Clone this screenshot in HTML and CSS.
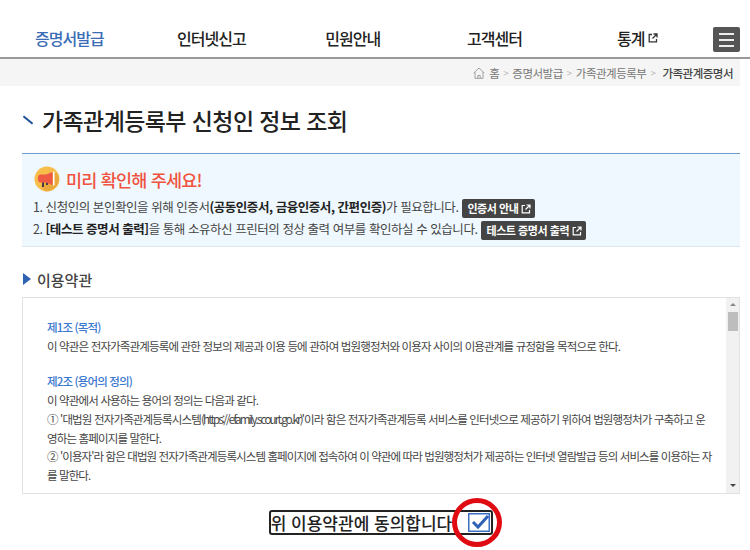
FILE: index.html
```html
<!DOCTYPE html>
<html lang="ko">
  <head>
    <meta charset="UTF-8" />
    <meta name="viewport" content="width=device-width, initial-scale=1.0" />
    <title>가족관계등록부 신청인 정보 조회</title>
    <link rel="stylesheet" href="styles.css">
  </head>
  <body>
    <header class="top-nav">
      <a class="nav-item active">증명서발급</a>
      <a class="nav-item">인터넷신고</a>
      <a class="nav-item">민원안내</a>
      <a class="nav-item">고객센터</a>
      <a class="nav-item">통계
        <svg class="ext-icon" viewBox="0 0 10 10"><path d="M4 1.500H1.200v7.300h7.300V6M5.500 1H9v3.500M9 1L4.500 5.500" fill="none" stroke="#333" stroke-width="1.300"/></svg>
      </a>
      <button class="menu-btn"><span></span><span></span><span></span></button>
    </header>

    <nav class="breadcrumb">
      <svg class="home-icon" viewBox="0 0 12 12"><path d="M0.700 6L6 1l5.300 5M2 5v6.300h8V5M4.800 11.300V8.500h2.400v2.800" fill="none" stroke="#999" stroke-width="0.900"/></svg>
      <span>홈</span><i class="sep">&gt;</i>
      <span>증명서발급</span><i class="sep">&gt;</i>
      <span>가족관계등록부</span><i class="sep">&gt;</i>
      <strong>가족관계증명서</strong>
    </nav>

    <main class="content">
      <h1 class="page-title"><span class="title-mark"></span>가족관계등록부 신청인 정보 조회</h1>

      <section class="notice">
        <div class="notice-head">
          <svg class="horn" viewBox="0 0 26 26">
            <circle cx="13" cy="13" r="12.500" fill="#f7bd4b"/>
            <path d="M20 5.500L24 8.500A12.500 12.500 0 0 1 11 25.300L7 20z" fill="#eaa93c"/>
            <rect x="8" y="15" width="2" height="6" fill="#4a3a45"/>
            <rect x="12" y="15" width="2" height="4" fill="#4a3a45"/>
            <path d="M7 8.500h5L18.500 6v13L12 16.500H7a3 3 0 0 1-3-3v-2a3 3 0 0 1 3-3z" fill="#ee5a44"/>
            <rect x="19" y="5.500" width="1.500" height="14" fill="#fff"/>
          </svg>
          <h2>미리 확인해 주세요!</h2>
        </div>
        <p>1. 신청인의 본인확인을 위해 인증서<b>(공동인증서, 금융인증서, 간편인증)</b>가 필요합니다.<a class="tag">인증서 안내<svg class="ext-icon" viewBox="0 0 10 10"><path d="M4 1.500H1.200v7.300h7.300V6M5.500 1H9v3.500M9 1L4.500 5.500" fill="none" stroke="#fff" stroke-width="1.200"/></svg></a></p>
        <p>2. <b>[테스트 증명서 출력]</b>을 통해 소유하신 프린터의 정상 출력 여부를 확인하실 수 있습니다.<a class="tag">테스트 증명서 출력<svg class="ext-icon" viewBox="0 0 10 10"><path d="M4 1.500H1.200v7.300h7.300V6M5.500 1H9v3.500M9 1L4.500 5.500" fill="none" stroke="#fff" stroke-width="1.200"/></svg></a></p>
      </section>

      <h3 class="section-title"><span class="arrow"></span>이용약관</h3>

      <div class="terms">
        <div class="terms-text">
          <h4>제1조 (목적)</h4>
          <p>이 약관은 전자가족관계등록에 관한 정보의 제공과 이용 등에 관하여 법원행정처와 이용자 사이의 이용관계를 규정함을 목적으로 한다.</p>
          <h4 class="gap">제2조 (용어의 정의)</h4>
          <p>이 약관에서 사용하는 용어의 정의는 다음과 같다.</p>
          <p>① '대법원 전자가족관계등록시스템<span class="url">(https://efamily.scourt.go.kr)</span>'이라 함은 전자가족관계등록 서비스를 인터넷으로 제공하기 위하여 법원행정처가 구축하고 운영하는 홈페이지를 말한다.</p>
          <p class="tight">② '이용자'라 함은 대법원 전자가족관계등록시스템 홈페이지에 접속하여 이 약관에 따라 법원행정처가 제공하는 인터넷 열람발급 등의 서비스를 이용하는 자를 말한다.</p>
        </div>
        <div class="scrollbar">
          <span class="up"></span>
          <span class="thumb"></span>
          <span class="down"></span>
        </div>
      </div>

      <div class="agree">
        <div class="agree-box">
          <span>위 이용약관에 동의합니다.</span>
          <svg class="check" viewBox="0 0 22 19">
            <rect x="0.750" y="0.750" width="20.500" height="17.500" fill="#fff" stroke="#3a6fc0" stroke-width="1.500"/>
            <path d="M5 9l5 5L20 3" fill="none" stroke="#2f62b5" stroke-width="3"/>
          </svg>
          <span class="red-circle"></span>
        </div>
      </div>
    </main>
  </body>
</html>
```

FILE: styles.css
```css
html, body {
    height: 550px;
    overflow: hidden;
}
body {
    margin: 0;
    font-family: "Noto Sans CJK KR", "Noto Sans", sans-serif;
    background-color: #fff;
    color: #333;
}
.top-nav {
    display: flex;
    align-items: center;
    height: 57px;
    padding-left: 35px;
    padding-right: 10px;
    border-bottom: 2px solid #999;
}
.nav-item {
    font-size: 16px;
    font-weight: 500;
    letter-spacing: -1px;
    color: #222;
    margin-top: 18px;
    margin-right: 73.500px;
    display: flex;
    align-items: center;
    gap: 4px;
}
.nav-item:nth-child(2) {
    margin-right: 79.500px;
}
.nav-item:nth-child(3) {
    margin-right: 87px;
}
.nav-item:nth-child(4) {
    margin-right: 95px;
}
.nav-item:nth-child(5) {
    margin-right: 0;
}
.nav-item.active {
    color: #3a6db5;
}
.ext-icon {
    width: 10px;
    height: 10px;
}
.menu-btn {
    margin-left: auto;
    margin-top: 22px;
    width: 27px;
    height: 25px;
    padding: 0;
    border: none;
    border-radius: 2px;
    background-color: #555;
    display: flex;
    flex-direction: column;
    justify-content: center;
    align-items: center;
    gap: 4px;
}
.menu-btn span {
    width: 15px;
    height: 2px;
    background-color: #eee;
}
.breadcrumb {
    margin-right: 10px;
    height: 27px;
    background-color: #f5f5f5;
    display: flex;
    align-items: center;
    justify-content: flex-end;
    padding-right: 7px;
    font-size: 11.500px;
    letter-spacing: -0.500px;
    color: #777;
    gap: 4px;
}
.breadcrumb strong {
    font-weight: 500;
    color: #444;
    margin-left: 3px;
}
.home-icon {
    width: 12px;
    height: 12px;
}
.sep {
    font-style: normal;
    font-size: 10px;
    color: #bbb;
}
.content {
    padding: 0 10px 0 22px;
}
.page-title {
    margin: 10px 0 0 0;
    height: 48px;
    display: flex;
    align-items: center;
    font-size: 23px;
    font-weight: 500;
    letter-spacing: -0.600px;
    color: #222;
}
.title-mark {
    width: 12px;
    height: 2px;
    background-color: #1f4f96;
    transform: rotate(40deg);
    margin-right: 8px;
}
.notice {
    margin-top: 9px;
    height: 94px;
    box-sizing: border-box;
    border-top: 1px solid #6f9bd1;
    border-bottom: 1px solid #dde8ee;
    background-color: #eff8fe;
    padding: 12px 12px 0 12px;
}
.notice-head {
    display: flex;
    align-items: center;
    gap: 6px;
    height: 26px;
    margin-bottom: 4px;
}
.horn {
    width: 26px;
    height: 26px;
}
.notice-head h2 {
    margin: 0;
    font-size: 17.500px;
    font-weight: 500;
    letter-spacing: -0.800px;
    color: #f0533f;
}
.notice p {
    margin: 0 0 0 -1px;
    line-height: 22px;
    white-space: nowrap;
    font-size: 12.500px;
    letter-spacing: -0.450px;
    color: #444;
}
.notice b {
    font-weight: 700;
    color: #222;
}
.tag {
    display: inline-flex;
    align-items: center;
    gap: 3px;
    height: 19px;
    margin-left: 4px;
    padding: 0 4px 0 5px;
    border-radius: 2px;
    background-color: #444;
    color: #fff;
    font-size: 11px;
    line-height: 19px;
    font-weight: 700;
    vertical-align: middle;
}
.section-title {
    margin: 21px 0 0 0;
    height: 22px;
    display: flex;
    align-items: center;
    font-size: 15px;
    font-weight: 500;
    color: #444;
}
.arrow {
    width: 0;
    height: 0;
    border-left: 8px solid #2f62b5;
    border-top: 6px solid transparent;
    border-bottom: 6px solid transparent;
    margin-left: 1px;
    margin-right: 6px;
}
.terms {
    margin-top: 7px;
    height: 197px;
    box-sizing: border-box;
    border: 1px solid #e2e2e2;
    display: flex;
}
.terms-text {
    flex: 1;
    padding: 20px 12px 0 24px;
    font-size: 11.500px;
    letter-spacing: -0.850px;
    line-height: 18.900px;
    color: #444;
    overflow: hidden;
    word-break: break-all;
}
.terms-text h4 {
    margin: 0;
    font-size: 11.500px;
    font-weight: 500;
    color: #3a78d0;
}
.terms-text h4.gap {
    margin-top: 16px;
}
.terms-text p {
    margin: 0;
}
.terms-text p.tight {
    letter-spacing: -0.900px;
}
.url {
    letter-spacing: -1.800px;
}
.scrollbar {
    width: 13px;
    background-color: #f1f1f1;
    display: flex;
    flex-direction: column;
    align-items: center;
}
.up, .down {
    width: 0;
    height: 0;
    border-left: 3px solid transparent;
    border-right: 3px solid transparent;
    margin: 5px 0 6px 0;
}
.up {
    border-bottom: 3px solid #888;
}
.down {
    border-top: 3px solid #444;
    margin-top: auto;
}
.thumb {
    width: 10px;
    height: 19px;
    background-color: #bdbdbd;
}
.agree {
    display: flex;
    justify-content: center;
    margin-top: 16px;
}
.agree-box {
    position: relative;
    display: flex;
    align-items: center;
    box-sizing: border-box;
    height: 25px;
    padding: 0 1px 0 0;
    border: 2px solid #222;
    border-radius: 3px;
    font-size: 17px;
    font-weight: 500;
    color: #222;
    gap: 11px;
}
.check {
    width: 22px;
    height: 19px;
}
.red-circle {
    position: absolute;
    right: -11px;
    top: -14px;
    width: 50px;
    height: 49px;
    box-sizing: border-box;
    border: 5px solid #e00a12;
    border-radius: 50%;
}
```
